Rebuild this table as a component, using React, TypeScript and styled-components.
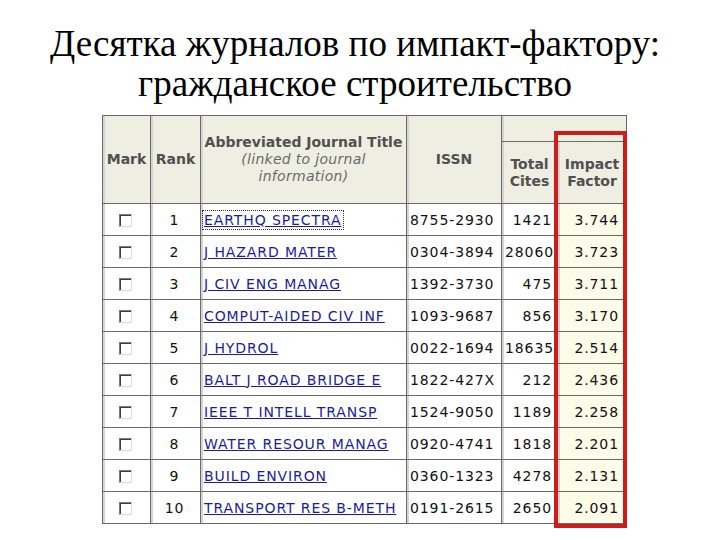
import React from "react";
import styled, { createGlobalStyle } from "styled-components";

const Global = createGlobalStyle`
  html, body { margin: 0; padding: 0; background: #ffffff; }
  body { width: 720px; height: 540px; overflow: hidden; }
`;

const Page = styled.div`
  width: 720px;
  height: 540px;
  display: flex;
  flex-direction: column;
  background: #fff;
`;

const Title = styled.div`
  margin: 24px 0 0 0;
  padding: 0 10px 0 0;
  font-family: "Liberation Serif", "Times New Roman", "DejaVu Serif", "Noto Serif", serif;
  font-weight: 400;
  font-size: 37px;
  line-height: 40px;
  color: #000;
  text-align: center;
  white-space: nowrap;
`;

const TableWrap = styled.div`
  position: relative;
  margin: 11px 0 0 102px;
  width: 524px;
`;

const Table = styled.table`
  border-collapse: collapse;
  border: 1px solid #000;
  font-family: "DejaVu Sans", Verdana, sans-serif;
  font-size: 14px;
  color: #111;
  table-layout: fixed;
  width: 524px;
`;

const Th = styled.th<{ $h?: number }>`
  background: #efeee2;
  color: #505050;
  font-weight: bold;
  border: 1px solid #6a6a6a;
  box-shadow: inset 2px 0 0 #d4d4d4;
  vertical-align: middle;
  text-align: center;
  padding: 0;
  height: ${(p) => (p.$h ? `${p.$h}px` : "auto")};
  line-height: 17px;
  white-space: nowrap;
`;

const Sub = styled.div`
  font-weight: normal;
  font-style: italic;
  color: #6a6a6a;
  letter-spacing: 0.3px;
`;

const Td = styled.td<{ $align: "left" | "center" | "right"; $hl?: boolean }>`
  height: 31px;
  border: 1px solid #6a6a6a;
  box-shadow: inset 2px 0 0 #d4d4d4;
  background: ${(p) => (p.$hl ? "#fdfce9" : "#ffffff")};
  text-align: ${(p) => p.$align};
  vertical-align: middle;
  padding: 0 ${(p) => (p.$hl ? 7 : 5)}px 0 3px;
  white-space: nowrap;
  letter-spacing: 0.9px;
`;

const Check = styled.span`
  display: inline-block;
  width: 13px;
  height: 13px;
  box-sizing: border-box;
  border-top: 1px solid #7a7a7a;
  border-left: 1px solid #7a7a7a;
  border-right: 1px solid #dcdcdc;
  border-bottom: 1px solid #dcdcdc;
  box-shadow: inset 1px 1px 0 #404040;
  background: #fff;
  vertical-align: middle;
`;

const Link = styled.a<{ $focus?: boolean }>`
  color: #1b1ba0;
  text-decoration: underline;
  outline: ${(p) => (p.$focus ? "1px dotted #333" : "none")};
  outline-offset: 1px;
`;

const Highlight = styled.div`
  position: absolute;
  left: 452px;
  top: 16px;
  width: 73px;
  height: 397px;
  box-sizing: border-box;
  border: 4px solid #cc1c1c;
  pointer-events: none;
`;

const rows: [number, string, string, number, string][] = [
  [1, "EARTHQ SPECTRA", "8755-2930", 1421, "3.744"],
  [2, "J HAZARD MATER", "0304-3894", 28060, "3.723"],
  [3, "J CIV ENG MANAG", "1392-3730", 475, "3.711"],
  [4, "COMPUT-AIDED CIV INF", "1093-9687", 856, "3.170"],
  [5, "J HYDROL", "0022-1694", 18635, "2.514"],
  [6, "BALT J ROAD BRIDGE E", "1822-427X", 212, "2.436"],
  [7, "IEEE T INTELL TRANSP", "1524-9050", 1189, "2.258"],
  [8, "WATER RESOUR MANAG", "0920-4741", 1818, "2.201"],
  [9, "BUILD ENVIRON", "0360-1323", 4278, "2.131"],
  [10, "TRANSPORT RES B-METH", "0191-2615", 2650, "2.091"],
];

export default function App() {
  return (
    <Page>
      <Global />
      <Title>
        Десятка журналов по импакт-фактору:
        <br />
        гражданское строительство
      </Title>
      <TableWrap>
        <Table>
          <colgroup>
            <col style={{ width: 48 }} />
            <col style={{ width: 50 }} />
            <col style={{ width: 206 }} />
            <col style={{ width: 95 }} />
            <col style={{ width: 56 }} />
            <col style={{ width: 69 }} />
          </colgroup>
          <thead>
            <tr>
              <Th rowSpan={2}>Mark</Th>
              <Th rowSpan={2}>Rank</Th>
              <Th rowSpan={2}>
                Abbreviated Journal Title
                <Sub>
                  (linked to journal
                  <br />
                  information)
                </Sub>
              </Th>
              <Th rowSpan={2}>ISSN</Th>
              <Th colSpan={2} $h={25}></Th>
            </tr>
            <tr>
              <Th $h={61}>
                Total
                <br />
                Cites
              </Th>
              <Th $h={61}>
                Impact
                <br />
                Factor
              </Th>
            </tr>
          </thead>
          <tbody>
            {rows.map(([rank, title, issn, cites, impact]) => (
              <tr key={rank}>
                <Td $align="center">
                  <Check />
                </Td>
                <Td $align="center">{rank}</Td>
                <Td $align="left">
                  <Link href="#" $focus={rank === 1}>
                    {title}
                  </Link>
                </Td>
                <Td $align="left">{issn}</Td>
                <Td $align="right">{cites}</Td>
                <Td $align="right" $hl>
                  {impact}
                </Td>
              </tr>
            ))}
          </tbody>
        </Table>
        <Highlight />
      </TableWrap>
    </Page>
  );
}
